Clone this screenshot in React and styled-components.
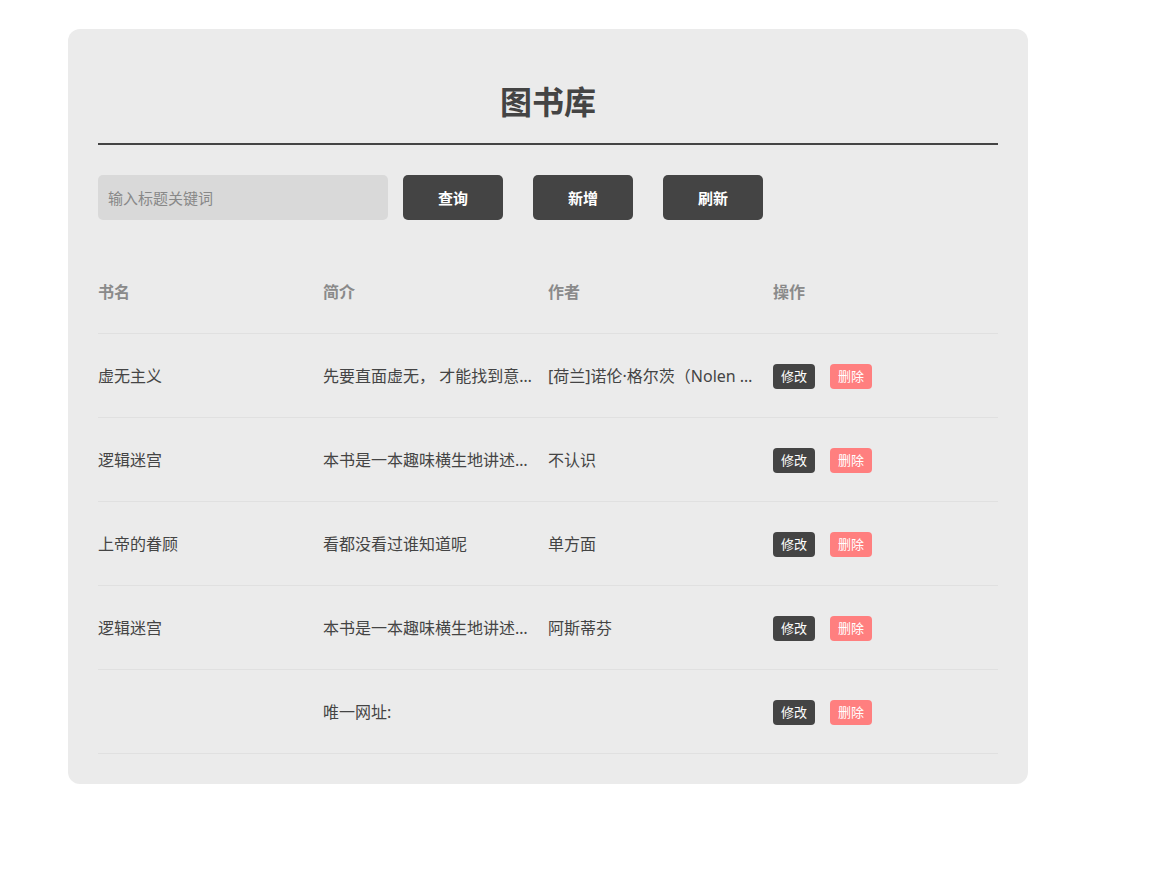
import React from "react";
import styled, { createGlobalStyle } from "styled-components";

const Global = createGlobalStyle`
  html, body { margin: 0; padding: 0; background: #fff; }
  body { font-family: "Noto Sans", "Noto Sans CJK SC", sans-serif; }
  * { box-sizing: border-box; }
`;

const Page = styled.div`
  padding: 29px 0 0 68px;
`;

const Card = styled.div`
  width: 960px;
  background: #ebebeb;
  border-radius: 12px;
  padding: 30px;
`;

const Title = styled.h1`
  margin: 0;
  padding: 21px 0 19px;
  font-size: 32px;
  line-height: 44px;
  font-weight: 700;
  color: #444;
  text-align: center;
  border-bottom: 2px solid #444;
`;

const Toolbar = styled.div`
  display: flex;
  align-items: center;
  margin-top: 30px;
  height: 45px;
`;

const SearchInput = styled.input`
  width: 290px;
  height: 45px;
  border: none;
  outline: none;
  border-radius: 5px;
  background: #d9d9d9;
  padding: 0 10px;
  font-family: inherit;
  font-size: 15px;
  color: #444;
  margin-right: 15px;
  &::placeholder { color: #888; }
`;

const ToolButton = styled.button`
  width: 100px;
  height: 45px;
  border: none;
  border-radius: 5px;
  background: #444;
  color: #fff;
  font-family: inherit;
  font-size: 15px;
  font-weight: 700;
  margin-right: 30px;
  cursor: pointer;
`;

const Table = styled.div`
  margin-top: 30px;
`;

const Row = styled.div`
  display: grid;
  grid-template-columns: repeat(4, 225px);
  align-items: center;
  height: 84px;
  border-bottom: 1px solid #e0e0e0;
`;

const Cell = styled.div`
  padding-right: ${(p) => (p.$pad ? "12px" : "0")};
  white-space: nowrap;
  overflow: hidden;
  text-overflow: ellipsis;
  font-size: 16px;
  line-height: 24px;
  color: ${(p) => (p.$head ? "#8a8a8a" : "#444")};
  font-weight: ${(p) => (p.$head ? 700 : 400)};
`;

const Actions = styled.div`
  display: flex;
  gap: 15px;
  align-items: center;
  padding-top: 2px;
`;

const SmallButton = styled.button`
  width: 42px;
  height: 25px;
  border: none;
  border-radius: 4px;
  padding: 0;
  background: ${(p) => (p.$danger ? "#ff7f7f" : "#444")};
  color: #fff;
  font-family: inherit;
  font-size: 13px;
  line-height: 25px;
  cursor: pointer;
`;

const books = [
  {
    name: "虚无主义",
    intro: "先要直面虚无， 才能找到意义所在，虚无主义并不可怕",
    author: "[荷兰]诺伦·格尔茨（Nolen Gertz）",
  },
  {
    name: "逻辑迷宫",
    intro: "本书是一本趣味横生地讲述逻辑学的书",
    author: "不认识",
  },
  { name: "上帝的眷顾", intro: "看都没看过谁知道呢", author: "单方面" },
  {
    name: "逻辑迷宫",
    intro: "本书是一本趣味横生地讲述逻辑学的书",
    author: "阿斯蒂芬",
  },
  { name: "", intro: "唯一网址:", author: "" },
];

export default function App() {
  return (
    <Page>
      <Global />
      <Card>
        <Title>图书库</Title>
        <Toolbar>
          <SearchInput placeholder="输入标题关键词" />
          <ToolButton>查询</ToolButton>
          <ToolButton>新增</ToolButton>
          <ToolButton>刷新</ToolButton>
        </Toolbar>
        <Table>
          <Row>
            <Cell $head>书名</Cell>
            <Cell $head>简介</Cell>
            <Cell $head>作者</Cell>
            <Cell $head>操作</Cell>
          </Row>
          {books.map((b, i) => (
            <Row key={i}>
              <Cell $pad>{b.name}</Cell>
              <Cell $pad>{b.intro}</Cell>
              <Cell $pad>{b.author}</Cell>
              <Actions>
                <SmallButton>修改</SmallButton>
                <SmallButton $danger>删除</SmallButton>
              </Actions>
            </Row>
          ))}
        </Table>
      </Card>
    </Page>
  );
}
